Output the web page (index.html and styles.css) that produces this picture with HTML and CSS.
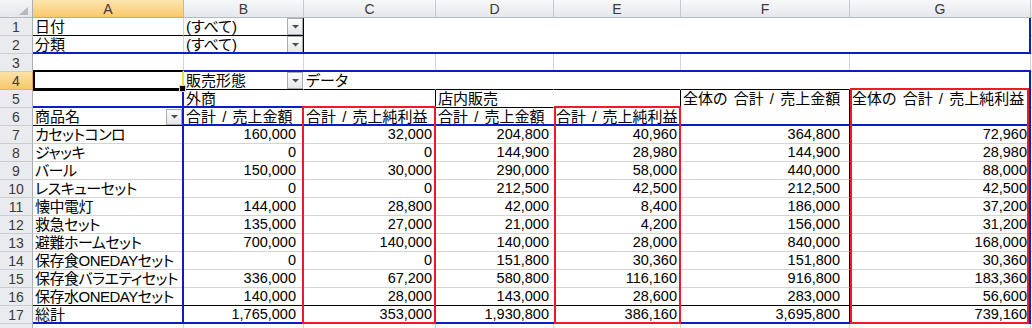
FILE: index.html
```html
<!DOCTYPE html>
<html lang="ja">
<head>
<meta charset="utf-8">
<title>ピボットテーブル</title>
<link rel="stylesheet" href="styles.css">
</head>
<body>
<div class="sheet">
  <!-- column headers -->
  <div class="corner"><svg width="9" height="8" viewBox="0 0 9 8"><polygon points="9,0 9,8 0,8" fill="#b6bac0"/></svg></div>
  <div class="ch sel">A</div><div class="ch">B</div><div class="ch">C</div><div class="ch">D</div><div class="ch">E</div><div class="ch">F</div><div class="ch">G</div><div class="ch"></div>

  <!-- row 1 -->
  <div class="rh">1</div>
  <div class="c bb">日付</div>
  <div class="c dd bb br"><span class="t">(すべて)</span><span class="btn"><svg width="7" height="4" viewBox="0 0 7 4"><polygon points="0,0 7,0 3.5,3.5" fill="#4e4e4e"/></svg></span></div>
  <div class="c w"></div><div class="c w"></div><div class="c w"></div><div class="c w"></div><div class="c w"></div><div class="c"></div>

  <!-- row 2 -->
  <div class="rh">2</div>
  <div class="c">分類</div>
  <div class="c dd br"><span class="t">(すべて)</span><span class="btn"><svg width="7" height="4" viewBox="0 0 7 4"><polygon points="0,0 7,0 3.5,3.5" fill="#4e4e4e"/></svg></span></div>
  <div class="c w"></div><div class="c w"></div><div class="c w"></div><div class="c w"></div><div class="c w"></div><div class="c"></div>

  <!-- row 3 -->
  <div class="rh">3</div>
  <div class="c"></div><div class="c"></div><div class="c"></div><div class="c"></div><div class="c"></div><div class="c"></div><div class="c"></div><div class="c"></div>

  <!-- row 4 -->
  <div class="rh sel">4</div>
  <div class="c"></div>
  <div class="c dd bb nv"><span class="t">販売形態</span><span class="btn"><svg width="7" height="4" viewBox="0 0 7 4"><polygon points="0,0 7,0 3.5,3.5" fill="#4e4e4e"/></svg></span></div>
  <div class="c bb nv">データ</div><div class="c bb nv"></div><div class="c bb nv"></div><div class="c bb nv"></div><div class="c bb nv"></div><div class="c"></div>

  <!-- row 5 -->
  <div class="rh">5</div>
  <div class="c nv"></div>
  <div class="c nv">外商</div>
  <div class="c br"></div>
  <div class="c bb nv">店内販売</div>
  <div class="c bb br"></div>
  <div class="c br hd span2">全体の 合計 / 売上金額</div>
  <div class="c nv hd span2">全体の 合計 / 売上純利益</div>
  <div class="c"></div>

  <!-- row 6 -->
  <div class="rh">6</div>
  <div class="c dd bb"><span class="t">商品名</span><span class="btn low"><svg width="7" height="4" viewBox="0 0 7 4"><polygon points="0,0 7,0 3.5,3.5" fill="#4e4e4e"/></svg></span></div>
  <div class="c hd">合計 / 売上金額</div>
  <div class="c hd">合計 / 売上純利益</div>
  <div class="c hd nv">合計 / 売上金額</div>
  <div class="c hd">合計 / 売上純利益</div>
  <div class="c"></div>

  <!-- data rows -->
  <div class="rh">7</div><div class="c it">カセットコンロ</div><div class="c n nb">160,000</div><div class="c n nc">32,000</div><div class="c n nd nv">204,800</div><div class="c n ne">40,960</div><div class="c n nf br">364,800</div><div class="c n ng">72,960</div><div class="c"></div>
  <div class="rh">8</div><div class="c it">ジャッキ</div><div class="c n nb">0</div><div class="c n nc">0</div><div class="c n nd nv">144,900</div><div class="c n ne">28,980</div><div class="c n nf br">144,900</div><div class="c n ng">28,980</div><div class="c"></div>
  <div class="rh">9</div><div class="c it">バール</div><div class="c n nb">150,000</div><div class="c n nc">30,000</div><div class="c n nd nv">290,000</div><div class="c n ne">58,000</div><div class="c n nf br">440,000</div><div class="c n ng">88,000</div><div class="c"></div>
  <div class="rh">10</div><div class="c it">レスキューセット</div><div class="c n nb">0</div><div class="c n nc">0</div><div class="c n nd nv">212,500</div><div class="c n ne">42,500</div><div class="c n nf br">212,500</div><div class="c n ng">42,500</div><div class="c"></div>
  <div class="rh">11</div><div class="c it">懐中電灯</div><div class="c n nb">144,000</div><div class="c n nc">28,800</div><div class="c n nd nv">42,000</div><div class="c n ne">8,400</div><div class="c n nf br">186,000</div><div class="c n ng">37,200</div><div class="c"></div>
  <div class="rh">12</div><div class="c it">救急セット</div><div class="c n nb">135,000</div><div class="c n nc">27,000</div><div class="c n nd nv">21,000</div><div class="c n ne">4,200</div><div class="c n nf br">156,000</div><div class="c n ng">31,200</div><div class="c"></div>
  <div class="rh">13</div><div class="c it">避難ホームセット</div><div class="c n nb">700,000</div><div class="c n nc">140,000</div><div class="c n nd nv">140,000</div><div class="c n ne">28,000</div><div class="c n nf br">840,000</div><div class="c n ng">168,000</div><div class="c"></div>
  <div class="rh">14</div><div class="c it">保存食ONEDAYセット</div><div class="c n nb">0</div><div class="c n nc">0</div><div class="c n nd nv">151,800</div><div class="c n ne">30,360</div><div class="c n nf br">151,800</div><div class="c n ng">30,360</div><div class="c"></div>
  <div class="rh">15</div><div class="c it">保存食バラエティセット</div><div class="c n nb">336,000</div><div class="c n nc">67,200</div><div class="c n nd nv">580,800</div><div class="c n ne">116,160</div><div class="c n nf br">916,800</div><div class="c n ng">183,360</div><div class="c"></div>
  <div class="rh">16</div><div class="c it bb">保存水ONEDAYセット</div><div class="c n nb bb">140,000</div><div class="c n nc bb">28,000</div><div class="c n nd nv bb">143,000</div><div class="c n ne bb">28,600</div><div class="c n nf br bb">283,000</div><div class="c n ng bb">56,600</div><div class="c"></div>
  <div class="rh">17</div><div class="c">総計</div><div class="c n nb">1,765,000</div><div class="c n nc">353,000</div><div class="c n nd nv">1,930,800</div><div class="c n ne">386,160</div><div class="c n nf br">3,695,800</div><div class="c n ng">739,160</div><div class="c"></div>

  <!-- row 18 (only its top edge is in view) -->
  <div class="rh"></div>
  <div class="c"></div><div class="c"></div><div class="c"></div><div class="c"></div><div class="c"></div><div class="c"></div><div class="c"></div><div class="c"></div>

  <!-- range outlines drawn over the cells -->
  <div class="overlay">
    <div class="o-filter"></div>
    <div class="o-pivot"></div>
    <div class="o-a17"></div>
    <div class="o-r5"></div>
    <div class="o-r6"></div>
    <div class="o-redc"></div>
    <div class="o-rede"></div>
    <div class="o-redg"></div>
    <div class="o-sel"><span class="handle"></span></div>
  </div>
</div>
</body>
</html>
```

FILE: styles.css
```css
html, body {
  margin: 0;
  padding: 0;
  background: #ffffff;
}

body {
  width: 1032px;
  height: 328px;
  overflow: hidden;
  font-family: "Liberation Sans", "Noto Sans CJK JP", sans-serif;
  font-feature-settings: "palt";
  font-size: 15px;
  color: #000;
}

.sheet {
  position: relative;
  width: 1032px;
  height: 328px;
  overflow: hidden;
  display: grid;
  grid-template-columns: 33px 151px 120px 132px 118px 127px 169px 181px 1fr;
  grid-template-rows: repeat(19, 18px);
}

.sheet > div {
  box-sizing: border-box;
}

/* column header row */
.corner {
  background: linear-gradient(#f4f5f7, #e4e7eb);
  border-right: 1px solid #a9aeb5;
  border-bottom: 1px solid #b5bac1;
  display: flex;
  justify-content: flex-end;
  align-items: flex-end;
  padding: 0 4px 2px 0;
}

.ch {
  background: linear-gradient(#f7f8fa, #e5e8ec);
  border-right: 1px solid #c5cad0;
  border-bottom: 1px solid #b5bac1;
  text-align: center;
  font-size: 14px;
  line-height: 17px;
  color: #3a3a3a;
  padding-top: 1px;
}

.ch.sel {
  background: linear-gradient(#fde6ae, #f8c96c);
  border-bottom-color: #e9a23b;
  border-right-color: #e9b35a;
}

/* row headers */
.rh {
  background: #e9ebee;
  border-right: 1px solid #a9aeb5;
  border-bottom: 1px solid #c9cdd2;
  text-align: center;
  font-size: 14px;
  line-height: 17px;
  color: #3a3a3a;
  padding-top: 1px;
}

.rh.sel {
  background: linear-gradient(#fde3a6, #f7c86c);
  border-right-color: #e9a23b;
  border-bottom-color: #e9b35a;
}

/* cells */
.c {
  border-right: 1px solid #d4d4d4;
  border-bottom: 1px solid #d4d4d4;
  padding: 0 2px 0 2px;
  line-height: 17px;
  white-space: nowrap;
  overflow: hidden;
}

.c.w {
  border-right-color: #ffffff;
  border-bottom-color: #ffffff;
}

.c.nv { border-right-color: #ffffff; }
.c.bb { border-bottom-color: #000000; }
.c.br { border-right-color: #000000; }

.c.span2 { grid-row: span 2; }

.hd { word-spacing: 2px; }

.it {
  letter-spacing: -0.5px;
}

/* numbers */
.n {
  text-align: right;
  font-size: 14.5px;
}
.nb { padding-right: 7px; }
.nc { padding-right: 3px; }
.nd { padding-right: 4px; }
.ne { padding-right: 3px; }
.nf { padding-right: 9px; }
.ng { padding-right: 3px; }

/* cells with a filter dropdown */
.dd {
  display: flex;
  align-items: flex-start;
  padding-right: 0;
}

.dd .t {
  flex: 1;
  overflow: hidden;
}

.btn {
  flex: none;
  width: 16px;
  height: 17px;
  box-sizing: border-box;
  border: 1px solid #a8acb2;
  background: linear-gradient(#fdfdfd, #e4e6e9);
  display: flex;
  align-items: center;
  justify-content: center;
}

.btn.low {
  height: 16px;
  margin-top: 1px;
  margin-right: 1px;
}

/* overlay of range outlines */
.overlay {
  position: absolute;
  inset: 0;
  display: grid;
  grid-template-columns: 33px 151px 120px 132px 118px 127px 169px 181px 1fr;
  grid-template-rows: repeat(19, 18px);
  pointer-events: none;
}

.overlay > div {
  box-sizing: border-box;
}

.o-filter {
  grid-column: 2 / 9;
  grid-row: 2 / 4;
  border-right: 2px solid #0a1ec8;
  border-bottom: 2px solid #0a1ec8;
}

.o-pivot {
  grid-column: 3 / 9;
  grid-row: 5 / 19;
  margin: -2px 0 0 -2px;
  border: 2px solid #0a1ec8;
}

.o-a17 {
  grid-column: 2 / 3;
  grid-row: 18 / 19;
  border-bottom: 2px solid #0a1ec8;
}

.o-r5 {
  grid-column: 2 / 4;
  grid-row: 6 / 7;
  border-bottom: 2px solid #0a1ec8;
}

.o-r6 {
  grid-column: 3 / 9;
  grid-row: 7 / 8;
  border-bottom: 2px solid #0a1ec8;
}

.o-redc {
  grid-column: 4 / 5;
  grid-row: 7 / 19;
  margin: -2px 0 0 -2px;
  border: 2px solid #ea1c2a;
}

.o-rede {
  grid-column: 6 / 7;
  grid-row: 7 / 19;
  margin: -2px 0 0 0;
  border: 2px solid #ea1c2a;
}

.o-redg {
  grid-column: 8 / 9;
  grid-row: 6 / 19;
  margin: -2px 2px 0 0;
  border: 2px solid #ea1c2a;
}

.o-sel {
  grid-column: 2 / 3;
  grid-row: 5 / 6;
  margin: -2px 0 -1px 0;
  border: 2px solid #000;
  border-bottom-width: 3px;
  border-right-color: #f0e23a;
  position: relative;
}

.handle {
  position: absolute;
  right: -4px;
  bottom: -4px;
  width: 5px;
  height: 5px;
  background: #000;
  border: 1px solid #f0e23a;
}
```
